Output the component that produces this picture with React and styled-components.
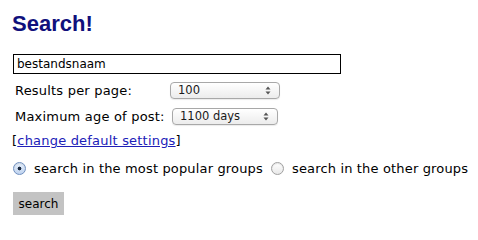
import React from 'react';
import styled, { createGlobalStyle } from 'styled-components';

const GlobalStyle = createGlobalStyle`
  html, body {
    margin: 0;
    padding: 0;
    background: #ffffff;
  }
  body {
    font-family: 'DejaVu Sans', Verdana, sans-serif;
    font-size: 13px;
    color: #000000;
  }
`;

const Page = styled.div`
  width: 478px;
  height: 227px;
  box-sizing: border-box;
  padding: 13px 0 0 12px;
  overflow: hidden;
`;

const Title = styled.h2`
  margin: 0 0 19px;
  font-family: 'Liberation Sans', Arial, sans-serif;
  font-size: 22px;
  font-weight: bold;
  line-height: 22px;
  color: #10107c;
`;

const Form = styled.form`
  display: flex;
  flex-direction: column;
  align-items: flex-start;
  margin: 0;
`;

const TextInput = styled.input`
  width: 328px;
  height: 20px;
  box-sizing: border-box;
  margin: 0 0 7px 1px;
  padding: 0 3px;
  border: 1px solid #000000;
  font-family: 'DejaVu Sans', Verdana, sans-serif;
  font-size: 12px;
  color: #000000;
  outline: none;
`;

const Row = styled.div`
  display: flex;
  align-items: center;
  height: 18px;
  margin: 0 0 8px 3px;
`;

const Label = styled.label`
  width: ${(p) => p.$width}px;
  font-size: 13px;
  letter-spacing: 0.2px;
`;

const SelectBox = styled.div`
  width: ${(p) => p.$width}px;
  height: 17px;
  box-sizing: border-box;
  padding: 0 0 0 7px;
  border: 1px solid #a8a8a8;
  border-radius: 4px;
  background: linear-gradient(#ffffff, #ececec);
  box-shadow: 0 1px 1px rgba(0, 0, 0, 0.08);
  display: flex;
  align-items: center;
  justify-content: space-between;
  font-size: 11.5px;
  color: #1a1a1a;
`;

const Arrows = styled.svg`
  width: 6px;
  height: 9px;
  margin-right: 8px;
`;

const Settings = styled.div`
  font-size: 13px;
  line-height: 16px;
  margin: 0 0 12px;
  letter-spacing: 0.2px;

  a {
    color: #2020b8;
    text-decoration: underline;
  }
`;

const RadioRow = styled.div`
  display: flex;
  align-items: center;
  gap: 8px;
  margin: 0 0 16px 1px;
  font-size: 13px;
  letter-spacing: 0.16px;
`;

const RadioDot = styled.span`
  width: 13px;
  height: 13px;
  box-sizing: border-box;
  border-radius: 50%;
  border: 1px solid ${(p) => (p.$checked ? '#6f8fbf' : '#a0a0a0')};
  background: ${(p) =>
    p.$checked
      ? 'radial-gradient(circle, #1b2a40 0 1.6px, transparent 2.2px), linear-gradient(#e6effb, #bfd3ef)'
      : 'linear-gradient(#ffffff, #e8e8e8)'};
  box-shadow: inset 0 1px 1px rgba(0, 0, 0, 0.1);
  flex-shrink: 0;
`;

const SubmitButton = styled.button`
  width: 51px;
  height: 23px;
  margin-left: 1px;
  padding: 0;
  border: none;
  background: #c3c3c3;
  font-family: 'DejaVu Sans', Verdana, sans-serif;
  font-size: 12px;
  color: #000000;
`;

function Select({ width, value }) {
  return (
    <SelectBox $width={width}>
      <span>{value}</span>
      <Arrows viewBox="0 0 6 9">
        <path d="M3 0.5 L5.5 3.5 H0.5 Z M3 8.5 L5.5 5.5 H0.5 Z" fill="#555" />
      </Arrows>
    </SelectBox>
  );
}

export default function App() {
  return (
    <Page>
      <GlobalStyle />
      <Title>Search!</Title>
      <Form onSubmit={(e) => e.preventDefault()}>
        <TextInput type="text" defaultValue="bestandsnaam" />
        <Row>
          <Label $width={155}>Results per page:</Label>
          <Select width={110} value="100" />
        </Row>
        <Row>
          <Label $width={157}>Maximum age of post:</Label>
          <Select width={106} value="1100 days" />
        </Row>
        <Settings>
          [<a href="#settings">change default settings</a>]
        </Settings>
        <RadioRow>
          <RadioDot $checked />
          <span>search in the most popular groups</span>
          <RadioDot />
          <span>search in the other groups</span>
        </RadioRow>
        <SubmitButton type="submit">search</SubmitButton>
      </Form>
    </Page>
  );
}
